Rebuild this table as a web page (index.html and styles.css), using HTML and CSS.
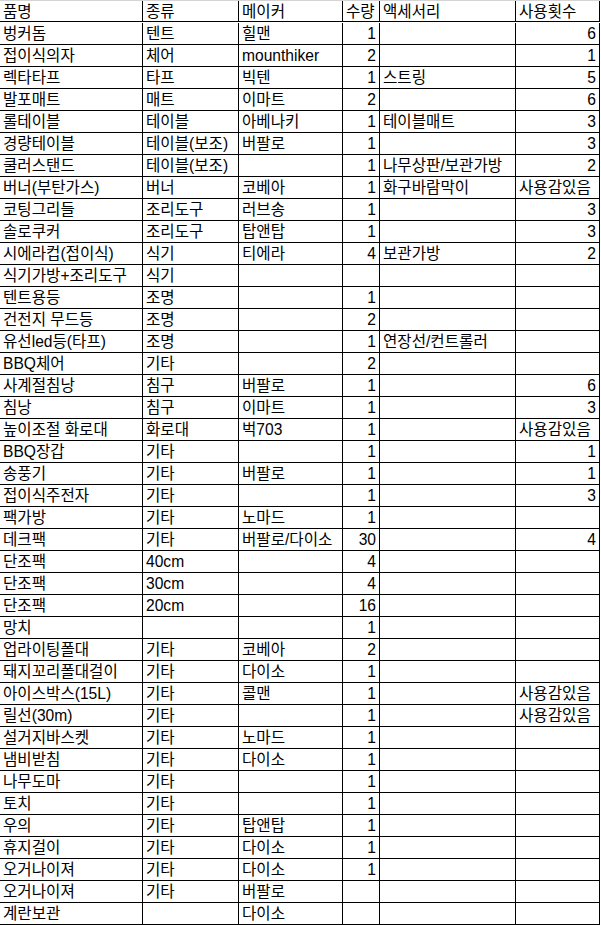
FILE: index.html
```html
<!DOCTYPE html>
<html lang="ko">
<head>
<meta charset="utf-8">
<title>캠핑장비 목록</title>
<link rel="stylesheet" href="styles.css">
</head>
<body>
<div class="sheet">
<div class="c">품명</div><div class="c">종류</div><div class="c">메이커</div><div class="c">수량</div><div class="c">액세서리</div><div class="c">사용횟수</div>
<div class="c">벙커돔</div><div class="c">텐트</div><div class="c">힐맨</div><div class="c n">1</div><div class="c"></div><div class="c n">6</div>
<div class="c">접이식의자</div><div class="c">체어</div><div class="c">mounthiker</div><div class="c n">2</div><div class="c"></div><div class="c n">1</div>
<div class="c">렉타타프</div><div class="c">타프</div><div class="c">빅텐</div><div class="c n">1</div><div class="c">스트링</div><div class="c n">5</div>
<div class="c">발포매트</div><div class="c">매트</div><div class="c">이마트</div><div class="c n">2</div><div class="c"></div><div class="c n">6</div>
<div class="c">롤테이블</div><div class="c">테이블</div><div class="c">아베나키</div><div class="c n">1</div><div class="c">테이블매트</div><div class="c n">3</div>
<div class="c">경량테이블</div><div class="c">테이블(보조)</div><div class="c">버팔로</div><div class="c n">1</div><div class="c"></div><div class="c n">3</div>
<div class="c">쿨러스탠드</div><div class="c">테이블(보조)</div><div class="c"></div><div class="c n">1</div><div class="c">나무상판/보관가방</div><div class="c n">2</div>
<div class="c">버너(부탄가스)</div><div class="c">버너</div><div class="c">코베아</div><div class="c n">1</div><div class="c">화구바람막이</div><div class="c">사용감있음</div>
<div class="c">코팅그리들</div><div class="c">조리도구</div><div class="c">러브송</div><div class="c n">1</div><div class="c"></div><div class="c n">3</div>
<div class="c">솔로쿠커</div><div class="c">조리도구</div><div class="c">탑앤탑</div><div class="c n">1</div><div class="c"></div><div class="c n">3</div>
<div class="c">시에라컵(접이식)</div><div class="c">식기</div><div class="c">티에라</div><div class="c n">4</div><div class="c">보관가방</div><div class="c n">2</div>
<div class="c">식기가방+조리도구</div><div class="c">식기</div><div class="c"></div><div class="c n"></div><div class="c"></div><div class="c"></div>
<div class="c">텐트용등</div><div class="c">조명</div><div class="c"></div><div class="c n">1</div><div class="c"></div><div class="c"></div>
<div class="c">건전지 무드등</div><div class="c">조명</div><div class="c"></div><div class="c n">2</div><div class="c"></div><div class="c"></div>
<div class="c">유선led등(타프)</div><div class="c">조명</div><div class="c"></div><div class="c n">1</div><div class="c">연장선/컨트롤러</div><div class="c"></div>
<div class="c">BBQ체어</div><div class="c">기타</div><div class="c"></div><div class="c n">2</div><div class="c"></div><div class="c"></div>
<div class="c">사계절침낭</div><div class="c">침구</div><div class="c">버팔로</div><div class="c n">1</div><div class="c"></div><div class="c n">6</div>
<div class="c">침낭</div><div class="c">침구</div><div class="c">이마트</div><div class="c n">1</div><div class="c"></div><div class="c n">3</div>
<div class="c">높이조절 화로대</div><div class="c">화로대</div><div class="c">벅703</div><div class="c n">1</div><div class="c"></div><div class="c">사용감있음</div>
<div class="c">BBQ장갑</div><div class="c">기타</div><div class="c"></div><div class="c n">1</div><div class="c"></div><div class="c n">1</div>
<div class="c">송풍기</div><div class="c">기타</div><div class="c">버팔로</div><div class="c n">1</div><div class="c"></div><div class="c n">1</div>
<div class="c">접이식주전자</div><div class="c">기타</div><div class="c"></div><div class="c n">1</div><div class="c"></div><div class="c n">3</div>
<div class="c">팩가방</div><div class="c">기타</div><div class="c">노마드</div><div class="c n">1</div><div class="c"></div><div class="c"></div>
<div class="c">데크팩</div><div class="c">기타</div><div class="c">버팔로/다이소</div><div class="c n">30</div><div class="c"></div><div class="c n">4</div>
<div class="c">단조팩</div><div class="c">40cm</div><div class="c"></div><div class="c n">4</div><div class="c"></div><div class="c"></div>
<div class="c">단조팩</div><div class="c">30cm</div><div class="c"></div><div class="c n">4</div><div class="c"></div><div class="c"></div>
<div class="c">단조팩</div><div class="c">20cm</div><div class="c"></div><div class="c n">16</div><div class="c"></div><div class="c"></div>
<div class="c">망치</div><div class="c"></div><div class="c"></div><div class="c n">1</div><div class="c"></div><div class="c"></div>
<div class="c">업라이팅폴대</div><div class="c">기타</div><div class="c">코베아</div><div class="c n">2</div><div class="c"></div><div class="c"></div>
<div class="c">돼지꼬리폴대걸이</div><div class="c">기타</div><div class="c">다이소</div><div class="c n">1</div><div class="c"></div><div class="c"></div>
<div class="c">아이스박스(15L)</div><div class="c">기타</div><div class="c">콜맨</div><div class="c n">1</div><div class="c"></div><div class="c">사용감있음</div>
<div class="c">릴선(30m)</div><div class="c">기타</div><div class="c"></div><div class="c n">1</div><div class="c"></div><div class="c">사용감있음</div>
<div class="c">설거지바스켓</div><div class="c">기타</div><div class="c">노마드</div><div class="c n">1</div><div class="c"></div><div class="c"></div>
<div class="c">냄비받침</div><div class="c">기타</div><div class="c">다이소</div><div class="c n">1</div><div class="c"></div><div class="c"></div>
<div class="c">나무도마</div><div class="c">기타</div><div class="c"></div><div class="c n">1</div><div class="c"></div><div class="c"></div>
<div class="c">토치</div><div class="c">기타</div><div class="c"></div><div class="c n">1</div><div class="c"></div><div class="c"></div>
<div class="c">우의</div><div class="c">기타</div><div class="c">탑앤탑</div><div class="c n">1</div><div class="c"></div><div class="c"></div>
<div class="c">휴지걸이</div><div class="c">기타</div><div class="c">다이소</div><div class="c n">1</div><div class="c"></div><div class="c"></div>
<div class="c">오거나이져</div><div class="c">기타</div><div class="c">다이소</div><div class="c n">1</div><div class="c"></div><div class="c"></div>
<div class="c">오거나이져</div><div class="c">기타</div><div class="c">버팔로</div><div class="c n"></div><div class="c"></div><div class="c"></div>
<div class="c">계란보관</div><div class="c"></div><div class="c">다이소</div><div class="c n"></div><div class="c"></div><div class="c"></div>
</div>
</body>
</html>
```

FILE: styles.css
```css
html, body {
  margin: 0;
  padding: 0;
  background: #ffffff;
}

body {
  font-family: "Liberation Sans", "Noto Sans CJK KR", sans-serif;
  font-size: 15.6px;
  color: #000000;
}

.sheet {
  width: 600px;
  display: grid;
  grid-template-columns: 143px 96px 104px 37px 136px 84px;
  grid-auto-rows: 22px;
  border-top: 1px solid #d4d4d4;
  box-sizing: border-box;
}

.sheet > .c:nth-child(-n+6) {
  height: 21px;
}

.c {
  box-sizing: border-box;
  border-right: 1px solid #000000;
  border-bottom: 1px solid #000000;
  padding: 1px 2px 0 3px;
  line-height: 20px;
  white-space: nowrap;
  overflow: hidden;
}

.n {
  text-align: right;
  padding-right: 3px;
}
```
